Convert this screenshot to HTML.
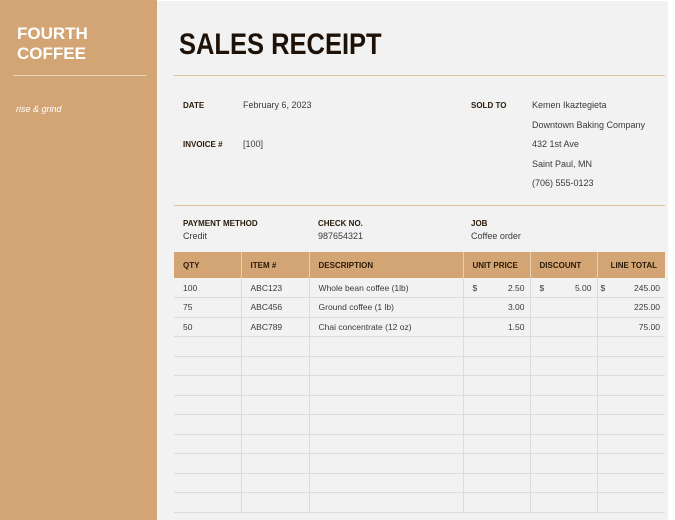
<!DOCTYPE html>
<html><head><style>
*{margin:0;padding:0;box-sizing:border-box}
body{width:675px;height:520px;background:#fff;font-family:"Liberation Sans",sans-serif;position:relative;overflow:hidden;color:#3a2a1a}
.side{position:absolute;left:0;top:0;width:157px;height:520px;background:#d4a574}
.main{position:absolute;left:157px;top:1px;width:511px;height:519px;background:#f2f2f2}
.a{position:absolute;white-space:nowrap}
.lbl{font-size:8px;font-weight:bold;color:#2a1a0a}
.v{font-size:9px;color:#3a3a3a}
.hr{position:absolute;left:174px;width:491px;height:1px;background:#dcc09c}
table{position:absolute;left:174px;top:252px;border-collapse:collapse;font-size:8.5px;color:#3a3a3a}
th{background:#d4a574;height:26px;font-size:8px;text-align:left;padding-left:9px;color:#2a1a0a;border-left:1px solid #e8cfae}
td{height:19.5px;border-bottom:1px solid #dcdcdc;border-left:1px solid #dcdcdc;padding:0 5px 0 9px}
td:first-child,th:first-child{border-left:none}
.r{text-align:right}
</style></head><body>
<div class="side"></div>
<div class="main"></div>
<div class="a" style="left:17px;top:24px;color:#fff;font-weight:bold;font-size:17px;line-height:20px">FOURTH<br>COFFEE</div>
<div class="a" style="left:13px;top:75px;width:133px;height:1px;background:#ecd6bb"></div>
<div class="a" style="left:16px;top:104px;color:#fff;font-size:9px;font-style:italic">rise &amp; grind</div>
<div class="a" style="left:179px;top:28px;font-size:30px;font-weight:bold;color:#1e1208;transform:scaleX(0.85);transform-origin:0 0">SALES RECEIPT</div>
<div class="hr" style="top:75px"></div>
<div class="a lbl" style="left:183px;top:101px">DATE</div>
<div class="a v" style="left:243px;top:100px">February 6, 2023</div>
<div class="a lbl" style="left:183px;top:140px">INVOICE #</div>
<div class="a v" style="left:243px;top:139px">[100]</div>
<div class="a lbl" style="left:471px;top:101px">SOLD TO</div>
<div class="a v" style="left:532px;top:96px;line-height:19.5px">Kemen Ikaztegieta<br>Downtown Baking Company<br>432 1st Ave<br>Saint Paul, MN<br>(706) 555-0123</div>
<div class="hr" style="top:205px"></div>
<div class="a lbl" style="left:183px;top:219px">PAYMENT METHOD</div>
<div class="a v" style="left:183px;top:231px">Credit</div>
<div class="a lbl" style="left:318px;top:219px">CHECK NO.</div>
<div class="a v" style="left:318px;top:231px">987654321</div>
<div class="a lbl" style="left:471px;top:219px">JOB</div>
<div class="a v" style="left:471px;top:231px">Coffee order</div>
<table>
<colgroup><col style="width:67px"><col style="width:68px"><col style="width:154px"><col style="width:67px"><col style="width:67px"><col style="width:68px"></colgroup>
<tr><th>QTY</th><th>ITEM #</th><th>DESCRIPTION</th><th>UNIT PRICE</th><th>DISCOUNT</th><th style="text-align:right;padding-right:8px">LINE TOTAL</th></tr>
<tr><td>100</td><td>ABC123</td><td>Whole bean coffee (1lb)</td><td class="r"><span style="float:left">$</span>2.50</td><td class="r"><span style="float:left">$</span>5.00</td><td class="r" style="padding-left:3px"><span style="float:left">$</span>245.00</td></tr>
<tr><td>75</td><td>ABC456</td><td>Ground coffee (1 lb)</td><td class="r">3.00</td><td></td><td class="r">225.00</td></tr>
<tr><td>50</td><td>ABC789</td><td>Chai concentrate (12 oz)</td><td class="r">1.50</td><td></td><td class="r">75.00</td></tr>
<tr><td></td><td></td><td></td><td></td><td></td><td></td></tr>
<tr><td></td><td></td><td></td><td></td><td></td><td></td></tr>
<tr><td></td><td></td><td></td><td></td><td></td><td></td></tr>
<tr><td></td><td></td><td></td><td></td><td></td><td></td></tr>
<tr><td></td><td></td><td></td><td></td><td></td><td></td></tr>
<tr><td></td><td></td><td></td><td></td><td></td><td></td></tr>
<tr><td></td><td></td><td></td><td></td><td></td><td></td></tr>
<tr><td></td><td></td><td></td><td></td><td></td><td></td></tr>
<tr><td></td><td></td><td></td><td></td><td></td><td></td></tr>
</table>
</body></html>
